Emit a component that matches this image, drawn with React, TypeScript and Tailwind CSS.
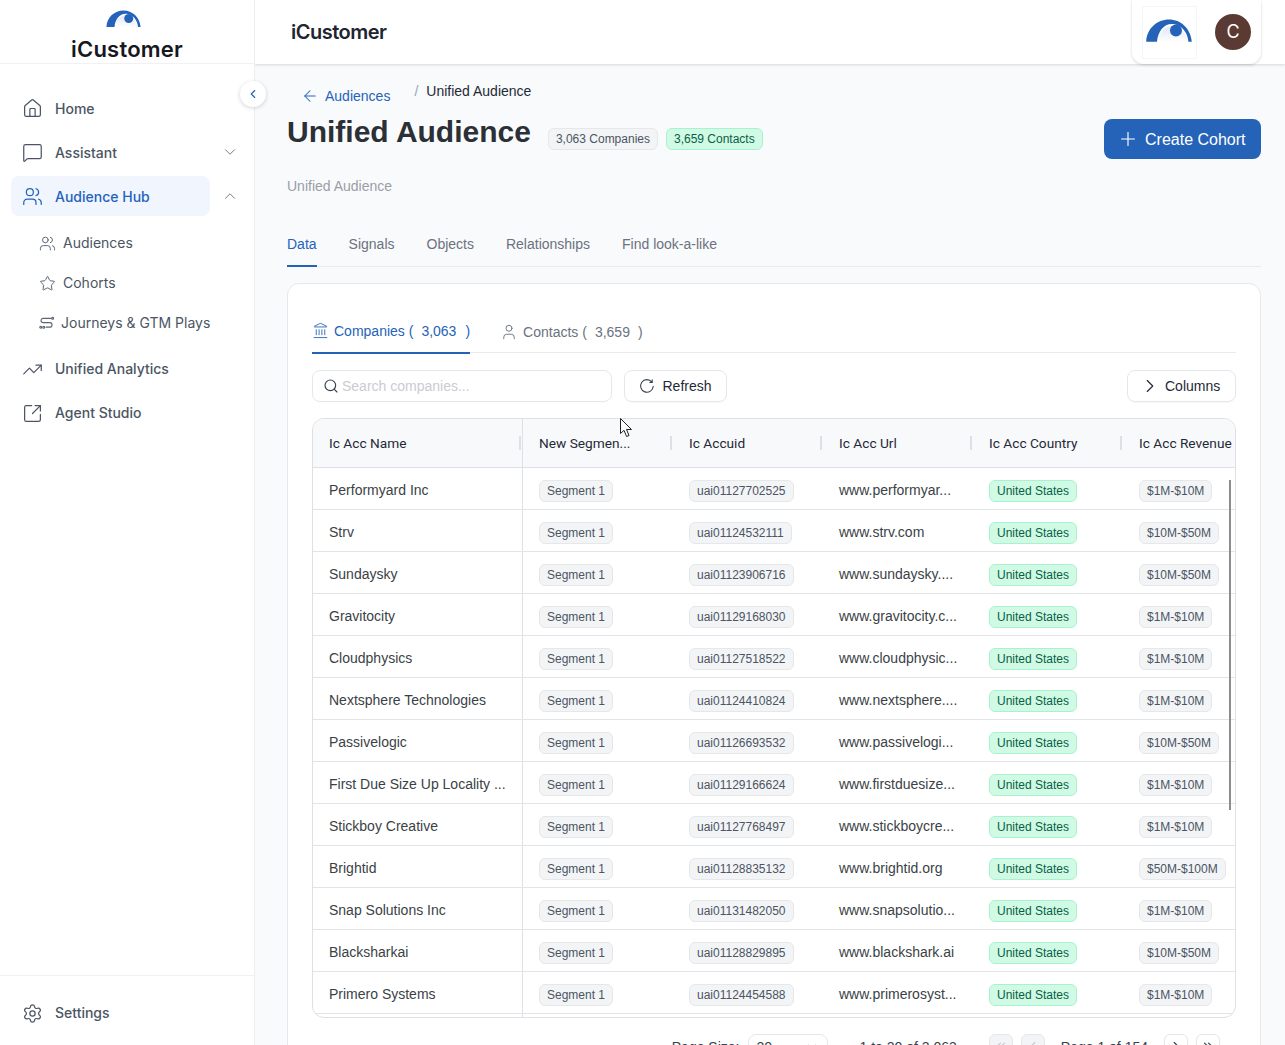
import React from "react";
import { Home, MessageSquare, Users, Star, TrendingUp, SquareArrowOutUpRight, Settings, ChevronDown, ChevronUp, ChevronLeft, ChevronRight, ChevronsLeft, ChevronsRight, ArrowLeft, Plus, Landmark, User, Search } from "lucide-react";

function Logo({ w, h }: { w: number; h: number }) {
  return (
    <svg width={w} height={h} viewBox="0 0 38 20">
      <defs>
        <linearGradient id="lg" x1="0" y1="0" x2="0" y2="1">
          <stop offset="0" stopColor="#dfe6f3" />
          <stop offset="1" stopColor="#ffffff" />
        </linearGradient>
      </defs>
      <path d="M10 19C10 11 15 6 22 6C29 7 33 12 34 19Z" fill="url(#lg)" />
      <path d="M0 19C0.5 8 9 0.5 19 0.5C29 0.5 37 8 38 19L35.2 19C34.5 11 29.5 5 22.5 4.2C15 3.5 9.8 10 9 19Z" fill="#2563b9" />
      <circle cx="24.8" cy="9.5" r="5" fill="#2563b9" />
    </svg>
  );
}

function JourneyIcon() {
  return (
    <svg width="15" height="15" viewBox="0 0 16 16" fill="none" stroke="#5b6675" strokeWidth="1.2" strokeLinecap="round">
      <path d="M13 2.5H4.5a2.2 2.2 0 0 0 0 4.6h7a2.3 2.3 0 0 1 0 4.8H7.5" />
      <circle cx="14.5" cy="2.5" r="1" />
      <circle cx="1.8" cy="12" r="1" />
      <circle cx="5" cy="12" r="1" />
    </svg>
  );
}

function RefreshIcon() {
  return (
    <svg width="16" height="16" viewBox="0 0 16 16" fill="none" stroke="#374151" strokeWidth="1.1" strokeLinecap="round">
      <path d="M12.9 4.1A6.3 6.3 0 1 0 14.2 8.2" />
      <path d="M13.2 1.9V4.4H10.9" />
    </svg>
  );
}

const rows = [
  ["Performyard Inc", "uai01127702525", "www.performyar...", "$1M-$10M"],
  ["Strv", "uai01124532111", "www.strv.com", "$10M-$50M"],
  ["Sundaysky", "uai01123906716", "www.sundaysky....", "$10M-$50M"],
  ["Gravitocity", "uai01129168030", "www.gravitocity.c...", "$1M-$10M"],
  ["Cloudphysics", "uai01127518522", "www.cloudphysic...", "$1M-$10M"],
  ["Nextsphere Technologies", "uai01124410824", "www.nextsphere....", "$1M-$10M"],
  ["Passivelogic", "uai01126693532", "www.passivelogi...", "$10M-$50M"],
  ["First Due Size Up Locality ...", "uai01129166624", "www.firstduesize...", "$1M-$10M"],
  ["Stickboy Creative", "uai01127768497", "www.stickboycre...", "$1M-$10M"],
  ["Brightid", "uai01128835132", "www.brightid.org", "$50M-$100M"],
  ["Snap Solutions Inc", "uai01131482050", "www.snapsolutio...", "$1M-$10M"],
  ["Blacksharkai", "uai01128829895", "www.blackshark.ai", "$10M-$50M"],
  ["Primero Systems", "uai01124454588", "www.primerosyst...", "$1M-$10M"],
];

function GrayBadge({ children }: { children: React.ReactNode }) {
  return <span className="inline-flex h-[22px] items-center rounded-md border border-[#e5e7eb] bg-[#f3f4f6] px-[7px] text-xs whitespace-nowrap text-[#4b5563]">{children}</span>;
}
function GreenBadge({ children }: { children: React.ReactNode }) {
  return <span className="inline-flex h-[22px] items-center rounded-md border border-[#a7f3d0] bg-[#d1fae5] px-[7px] text-xs whitespace-nowrap text-[#065f46]">{children}</span>;
}

function NavItem({ icon, label, right, active, low }: { icon: React.ReactNode; label: string; right?: React.ReactNode; active?: boolean; low?: boolean }) {
  return (
    <div className="flex items-center">
      <div className={`flex h-10 w-[199px] items-center gap-[12px] rounded-lg pl-[11px] font-['Inter',sans-serif] text-sm font-medium ${active ? "bg-[#f0f5fe] text-[#2563b9]" : "text-[#4b5563]"}`}>
        {icon}
        <span className={low ? "pt-[2px]" : ""}>{label}</span>
      </div>
      {right && <div className="ml-[11px] text-[#6b7280]">{right}</div>}
    </div>
  );
}

function SubItem({ icon, label }: { icon: React.ReactNode; label: string }) {
  return (
    <div className="flex h-10 items-center gap-[7px] pl-[28px] font-['Inter',sans-serif] text-sm text-[#4b5563]">
      {icon}
      <span>{label}</span>
    </div>
  );
}

function Th({ children, w, sep }: { children: React.ReactNode; w: string; sep?: boolean }) {
  return (
    <div className={`relative flex h-full shrink-0 items-center pl-4 font-['Roboto',sans-serif] text-[13.7px] whitespace-nowrap text-[#1f2937] ${w}`}>
      <span className="pt-[2px]">{children}</span>
      {sep && <span className="absolute top-[17px] right-[1px] h-[14px] w-[2px] bg-[#dde0e4]" />}
    </div>
  );
}

function Td({ children, w, border }: { children: React.ReactNode; w: string; border?: boolean }) {
  return <div className={`flex h-full shrink-0 items-center pl-4 ${w} ${border ? "border-r border-[#dde0e4]" : ""}`}>{children}</div>;
}

function Cell({ children }: { children: React.ReactNode }) {
  return <span className="pt-[2px] whitespace-nowrap">{children}</span>;
}

function Low({ children }: { children: React.ReactNode }) {
  return <span className="flex pt-[4px]">{children}</span>;
}

export default function App() {
  return (
    <div className="flex h-[1045px] w-[1285px] overflow-hidden bg-[#f9fafc] font-['Liberation_Sans',Arial,sans-serif]">
      {/* Sidebar */}
      <aside className="relative z-10 flex h-full w-[255px] shrink-0 flex-col border-r border-[#eceef1] bg-white">
        <div className="flex h-[64px] shrink-0 flex-col items-center border-b border-[#f0f1f3] pt-[10px]">
          <div className="mr-[8px] flex"><Logo w={37} h={18} /></div>
          <span className="mt-[9px] font-['Inter',sans-serif] text-[22px] leading-[24px] font-semibold tracking-[0.2px] text-[#16181d]">iCustomer</span>
        </div>
        <nav className="flex flex-1 flex-col px-[11px] pt-[24px]">
          <div className="mb-1"><NavItem low icon={<Home size={21} strokeWidth={1.4} />} label="Home" /></div>
          <div className="mb-1"><NavItem low icon={<MessageSquare size={21} strokeWidth={1.4} />} label="Assistant" right={<ChevronDown size={18} strokeWidth={1.25} />} /></div>
          <NavItem low active icon={<Users size={21} strokeWidth={1.4} />} label="Audience Hub" right={<ChevronUp size={18} strokeWidth={1.25} />} />
          <div className="mt-[7px]">
            <SubItem icon={<Users size={17} strokeWidth={1.4} className="text-[#5b6675]" />} label="Audiences" />
            <SubItem icon={<Star size={17} strokeWidth={1.4} className="text-[#5b6675]" />} label="Cohorts" />
            <SubItem icon={<JourneyIcon />} label="Journeys & GTM Plays" />
          </div>
          <div className="mt-[6px]"><NavItem icon={<TrendingUp size={21} strokeWidth={1.4} />} label="Unified Analytics" /></div>
          <div className="mt-1"><NavItem icon={<SquareArrowOutUpRight size={21} strokeWidth={1.4} />} label="Agent Studio" /></div>
        </nav>
        <div className="flex h-[70px] shrink-0 items-start border-t border-[#f0f1f3] px-[11px] pt-[17px]">
          <NavItem icon={<Settings size={21} strokeWidth={1.4} />} label="Settings" />
        </div>
        <button className="absolute top-[81px] right-[-12px] flex h-[26px] w-[26px] items-center justify-center rounded-full bg-white text-[#2563b9] shadow-[0_1px_4px_rgba(0,0,0,0.18)]">
          <ChevronLeft size={14} strokeWidth={2} />
        </button>
      </aside>

      <div className="flex min-w-0 flex-1 flex-col">
        {/* Header */}
        <header className="relative flex h-[64px] shrink-0 items-center justify-between bg-white pl-[36px] shadow-[0_1px_3px_rgba(0,0,0,0.14)]">
          <span className="font-['Inter',sans-serif] text-xl font-semibold tracking-tight text-[#1f2530]">iCustomer</span>
          <div className="absolute top-0 right-[24px] flex h-[64px] w-[129px] items-center rounded-b-xl bg-white pl-[10px] shadow-[0_1px_3px_rgba(0,0,0,0.16)]">
            <div className="flex h-[53px] w-[55px] items-center justify-center border border-[#f5f6f8] pr-[2px] pb-[3px]"><Logo w={46} h={24} /></div>
            <div className="ml-[18px] flex h-9 w-9 items-center justify-center rounded-full bg-[#5b3a33] font-['Inter',sans-serif] text-lg text-white">C</div>
          </div>
        </header>

        {/* Page */}
        <main className="flex flex-col pt-[1px] pr-[24px] pl-[32px]">
          <div className="flex h-[36px] items-start pt-[10px]">
            <div className="mt-[11px] flex items-center gap-[6px] pl-[14px] text-sm text-[#2563b9]">
              <ArrowLeft size={18} strokeWidth={1.4} />
              <span>Audiences</span>
            </div>
            <span className="mt-[6px] ml-[24px] text-sm text-[#9ca3af]">/</span>
            <span className="mt-[6px] ml-[8px] text-sm text-[#1f2937]">Unified Audience</span>
          </div>
          <div className="flex items-start justify-between">
            <div className="flex items-center">
              <h1 className="mt-[11px] text-[30px] leading-[40px] font-bold text-[#2b2f36]">Unified Audience</h1>
              <div className="mt-[24px] ml-[17px] flex gap-2">
                <GrayBadge>3,063 Companies</GrayBadge>
                <GreenBadge>3,659 Contacts</GreenBadge>
              </div>
            </div>
            <button className="mt-[18px] flex h-10 w-[157px] items-center gap-[6px] rounded-lg bg-[#2563b9] pl-[13px] text-base text-white">
              <Plus size={22} strokeWidth={1.25} />
              <span className="pt-[2px]">Create Cohort</span>
            </button>
          </div>
          <p className="mt-[17px] text-sm leading-5 text-[#9a9ea6]">Unified Audience</p>

          <div className="mt-[38px] flex h-[33px] gap-8 border-b border-[#e8eaed] text-sm text-[#6b7280]">
            <div className="-mb-px flex h-[33px] items-start border-b-2 border-[#2563b9] text-[#2563b9]">Data</div>
            <span>Signals</span>
            <span>Objects</span>
            <span>Relationships</span>
            <span>Find look-a-like</span>
          </div>

          <section className="mt-[16px] rounded-xl border border-[#e6e8eb] bg-white px-[24px] pt-[24px]">
            <div className="flex h-[45px] border-b border-[#e8eaed] text-sm">
              <div className="-mb-px flex h-[46px] items-center border-b-2 border-[#2563b9] pt-[1px] text-[#2563b9]">
                <Landmark size={17} strokeWidth={1.25} className="mr-[5px]" />
                <span>Companies (</span>
                <span className="ml-[8px]">3,063</span>
                <span className="ml-[9px]">)</span>
              </div>
              <div className="ml-[30px] flex h-[46px] items-center pt-[1px] text-[#6b7280]">
                <User size={18} strokeWidth={1.25} className="mr-[5px]" />
                <span>Contacts (</span>
                <span className="ml-[8px]">3,659</span>
                <span className="ml-[8px]">)</span>
              </div>
            </div>

            <div className="mt-[17px] flex items-center">
              <div className="flex h-[32px] w-[300px] items-center gap-[3px] rounded-lg border border-[#e5e7eb] pl-[10px] text-sm text-[#c9ccd1]">
                <Search size={16} strokeWidth={1.75} className="text-[#374151]" />
                <span>Search companies...</span>
              </div>
              <button className="ml-[12px] flex h-[32px] w-[103px] items-center justify-center gap-[7px] rounded-lg border border-[#e5e7eb] text-sm text-[#1f2937] shadow-[0_1px_1px_rgba(0,0,0,0.03)]">
                <RefreshIcon />
                Refresh
              </button>
              <button className="ml-auto flex h-[32px] w-[109px] items-center gap-[4px] rounded-lg border border-[#e5e7eb] pl-[11px] text-sm text-[#1f2937] shadow-[0_1px_1px_rgba(0,0,0,0.03)]">
                <ChevronRight size={22} strokeWidth={1.25} />
                Columns
              </button>
            </div>

            <div className="relative mt-[16px] h-[600px] overflow-hidden rounded-xl border border-[#dde0e4] text-sm">
              <div className="flex h-[49px] border-b border-[#dde0e4] bg-[#f8f9fa]">
                <div className="flex h-full w-[210px] shrink-0 items-center border-r border-[#dde0e4]">
                  <Th w="w-[209px]" sep>Ic Acc Name</Th>
                </div>
                <Th w="w-[150px]" sep>New Segmen...</Th>
                <Th w="w-[150px]" sep>Ic Accuid</Th>
                <Th w="w-[150px]" sep>Ic Acc Url</Th>
                <Th w="w-[150px]" sep>Ic Acc Country</Th>
                <Th w="w-[113px]">Ic Acc Revenue</Th>
              </div>
              {rows.map((r) => (
                <div key={r[1]} className="flex h-[42px] border-b border-[#e2e4e8] text-[#3b3f46]">
                  <Td w="w-[210px]" border><Cell>{r[0]}</Cell></Td>
                  <Td w="w-[150px]"><Low><GrayBadge>Segment 1</GrayBadge></Low></Td>
                  <Td w="w-[150px]"><Low><GrayBadge>{r[1]}</GrayBadge></Low></Td>
                  <Td w="w-[150px]"><Cell>{r[2]}</Cell></Td>
                  <Td w="w-[150px]"><Low><GreenBadge>United States</GreenBadge></Low></Td>
                  <Td w="w-[113px]"><Low><GrayBadge>{r[3]}</GrayBadge></Low></Td>
                </div>
              ))}
              <div className="flex h-[42px]">
                <Td w="w-[210px]" border>{null}</Td>
              </div>
              <span className="absolute top-[61px] right-[4px] h-[330px] w-[2px] bg-[#8b8d91]" />
            </div>

            <div className="mt-[16px] flex h-[32px] items-start justify-end pr-[16px] text-sm text-[#374151]">
              <span className="pt-[3px]">Page Size:</span>
              <div className="ml-[8px] flex h-[32px] w-[80px] items-start justify-between rounded-lg border border-[#e5e7eb] px-[8px] pt-[2px]">
                <span>20</span>
                <ChevronDown size={14} className="mt-[3px] text-[#9ca3af]" />
              </div>
              <span className="ml-[32px] pt-[3px]">1 to 20 of 3,063</span>
              <div className="ml-[32px] flex h-[32px] w-[24px] items-start justify-center rounded-md border border-[#e5e7eb] bg-[#f3f4f6] pt-[4px] text-[#c5c8cd]"><ChevronsLeft size={14} /></div>
              <div className="ml-[8px] flex h-[32px] w-[24px] items-start justify-center rounded-md border border-[#e5e7eb] bg-[#f3f4f6] pt-[4px] text-[#c5c8cd]"><ChevronLeft size={14} /></div>
              <span className="ml-[16px] pt-[3px]">Page 1 of 154</span>
              <div className="ml-[16px] flex h-[32px] w-[24px] items-start justify-center rounded-md border border-[#e5e7eb] pt-[4px]"><ChevronRight size={14} /></div>
              <div className="ml-[8px] flex h-[32px] w-[24px] items-start justify-center rounded-md border border-[#e5e7eb] pt-[4px]"><ChevronsRight size={14} /></div>
            </div>
          </section>
        </main>
      </div>

      {/* Mouse pointer over the page */}
      <svg className="pointer-events-none absolute top-[417px] left-[619px]" width="15" height="22" viewBox="0 0 15 22">
        <path d="M1.5 1.5V16.5L5 13.3L7.6 19.5L10 18.5L7.5 12.5H12.5Z" fill="#fff" stroke="#222" strokeWidth="1" />
      </svg>
    </div>
  );
}
